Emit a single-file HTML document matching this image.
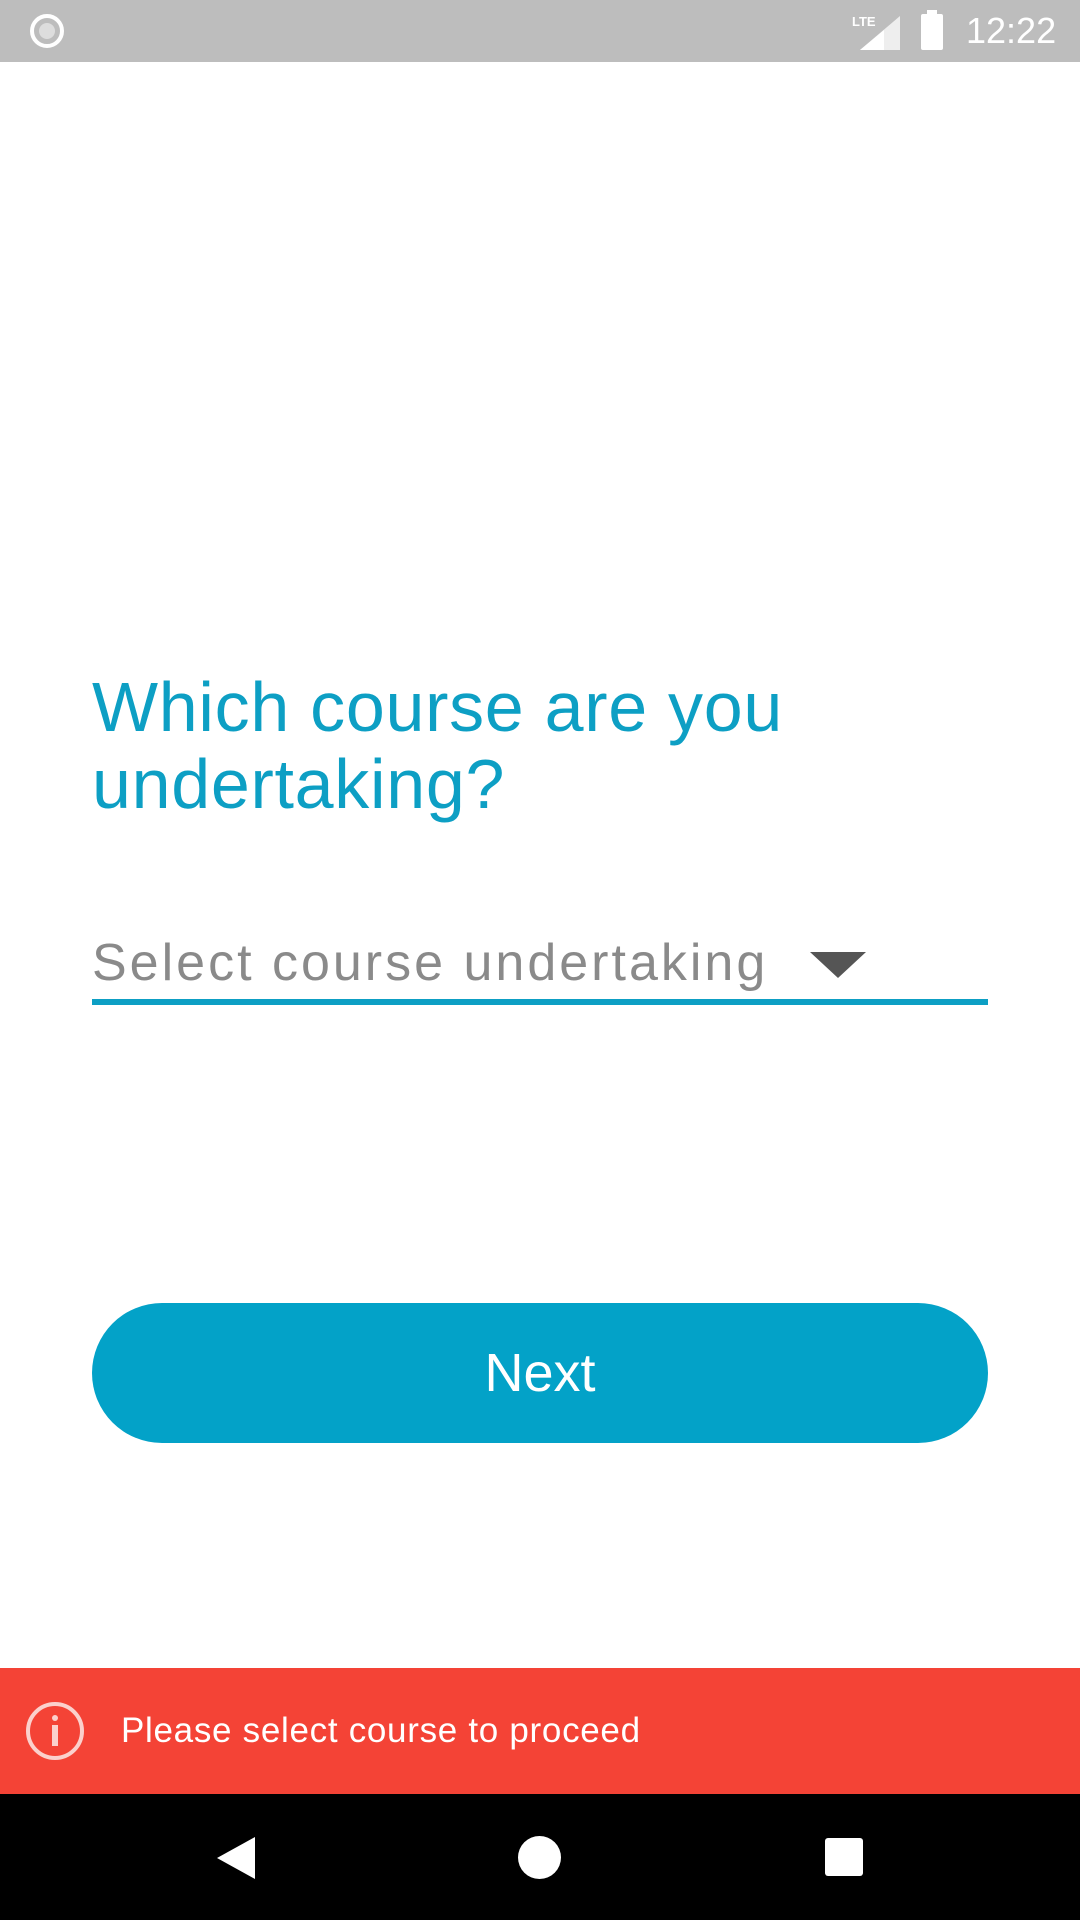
<!DOCTYPE html>
<html><head><meta charset="utf-8"><style>
html,body{margin:0;padding:0;width:1080px;height:1920px;background:#fff;overflow:hidden;font-family:"Liberation Sans",sans-serif;position:relative}
.abs{position:absolute}
</style></head><body>
<div class="abs" style="left:0;top:0;width:1080px;height:62px;background:#bdbdbd"></div>
<div class="abs" style="left:30px;top:14px;width:26px;height:26px;border:4px solid #fff;border-radius:50%;"></div>
<div class="abs" style="left:39px;top:23px;width:16px;height:16px;background:#ddd;border-radius:50%;"></div>
<svg class="abs" style="left:850px;top:12px" width="52" height="40"><text x="2" y="14" font-size="13" fill="#fff" font-family="Liberation Sans" font-weight="bold">LTE</text><polygon points="10,38 50,38 50,4" fill="#eee"/><polygon points="10,38 34,38 34,18" fill="#fff"/></svg>
<div class="abs" style="left:921px;top:14px;width:22px;height:36px;background:#fff;border-radius:2px"></div>
<div class="abs" style="left:927px;top:10px;width:10px;height:5px;background:#fff"></div>
<div class="abs" style="left:966px;top:10px;font-size:36px;color:#fff;">12:22</div>

<div class="abs" style="left:92px;top:669px;font-size:70px;line-height:77px;color:#0d9fc4;letter-spacing:0.7px">Which course are you<br>undertaking?</div>
<div class="abs" style="left:92px;top:933px;font-size:52px;color:#8a8a8a;font-weight:300;letter-spacing:3px">Select course undertaking</div>
<svg class="abs" style="left:810px;top:952px" width="56" height="28"><polygon points="0,0 56,0 28,26" fill="#555"/></svg>
<div class="abs" style="left:92px;top:999px;width:896px;height:6px;background:#0d9fc4"></div>

<div class="abs" style="left:92px;top:1303px;width:896px;height:140px;border-radius:70px;background:#03a2c8;color:#fff;font-size:54px;line-height:140px;text-align:center">Next</div>

<div class="abs" style="left:0;top:1668px;width:1080px;height:126px;background:#f44336"></div>
<div class="abs" style="left:26px;top:1702px;width:58px;height:58px;border:4px solid #fbd0cc;border-radius:50%;box-sizing:border-box"></div>
<div class="abs" style="left:52px;top:1715px;width:6px;height:6px;background:#fbd0cc;border-radius:50%"></div>
<div class="abs" style="left:52px;top:1725px;width:6px;height:21px;background:#fbd0cc"></div>
<div class="abs" style="left:121px;top:1711px;font-size:35px;color:#fff;letter-spacing:0.7px">Please select course to proceed</div>

<div class="abs" style="left:0;top:1794px;width:1080px;height:126px;background:#000"></div>
<svg class="abs" style="left:215px;top:1835px" width="44" height="46"><polygon points="40,2 40,44 2,23" fill="#fff"/></svg>
<div class="abs" style="left:518px;top:1836px;width:43px;height:43px;border-radius:50%;background:#fff"></div>
<div class="abs" style="left:825px;top:1838px;width:38px;height:38px;border-radius:3px;background:#fff"></div>
</body></html>
